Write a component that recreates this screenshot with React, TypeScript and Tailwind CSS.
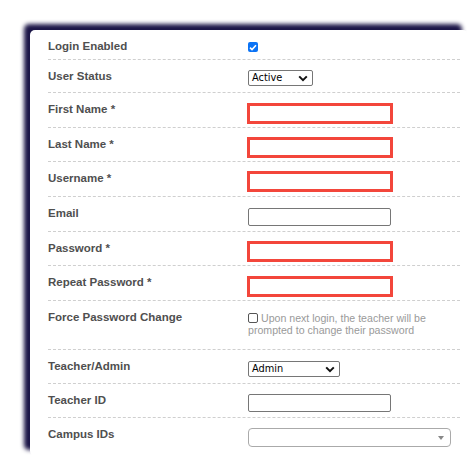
import { FC, ReactNode } from "react";

type Row = {
  label: string;
  height: string;
  control: ReactNode;
  last?: boolean;
};

const Chevron: FC = () => (
  <svg width="10" height="7" viewBox="0 0 10 7" className="shrink-0">
    <path d="M1.2 1.4 L5 5.2 L8.8 1.4" fill="none" stroke="#111" strokeWidth="2" />
  </svg>
);

const TextBox: FC<{ required?: boolean }> = ({ required }) =>
  required ? (
    <div className="ml-[-1px] h-[21px] w-[146px] border-[3px] border-[#f3463b] bg-white" />
  ) : (
    <div className="h-[18px] w-[143px] rounded-[2px] border border-[#767676] bg-white" />
  );

const NativeSelect: FC<{ value: string; width: string }> = ({ value, width }) => (
  <div
    className={`flex h-[16px] items-center justify-between rounded-[2px] border border-[#767676] bg-white pl-[3px] pr-[4px] font-['DejaVu_Sans',sans-serif] text-[9.8px] text-black ${width}`}
  >
    <span>{value}</span>
    <Chevron />
  </div>
);

export default function App() {
  const rows: Row[] = [
    {
      label: "Login Enabled",
      height: "h-[30px]",
      control: (
        <div className="pt-[12px]">
          <div className="flex h-[10px] w-[10px] items-center justify-center rounded-[2px] bg-[#0b73f5]">
            <svg width="8" height="7" viewBox="0 0 8 7">
              <path d="M1 3.6 L3 5.6 L7 1.2" fill="none" stroke="#fff" strokeWidth="1.6" />
            </svg>
          </div>
        </div>
      ),
    },
    {
      label: "User Status",
      height: "h-[33px]",
      control: (
        <div className="pt-[10px]">
          <NativeSelect value="Active" width="w-[65px]" />
        </div>
      ),
    },
    { label: "First Name *", height: "h-[35px]", control: <div className="pt-[10px]"><TextBox required /></div> },
    { label: "Last Name *", height: "h-[34px]", control: <div className="pt-[9px]"><TextBox required /></div> },
    { label: "Username *", height: "h-[35px]", control: <div className="pt-[9px]"><TextBox required /></div> },
    { label: "Email", height: "h-[35px]", control: <div className="pt-[11px]"><TextBox /></div> },
    { label: "Password *", height: "h-[34px]", control: <div className="pt-[9px]"><TextBox required /></div> },
    { label: "Repeat Password *", height: "h-[35px]", control: <div className="pt-[10px]"><TextBox required /></div> },
    {
      label: "Force Password Change",
      height: "h-[49px]",
      control: (
        <div className="pt-[11px] pr-[20px] font-['Liberation_Sans',Arial,sans-serif] text-[10.6px] leading-[12px] text-[#9a9a9a]">
          <span className="mr-[3px] inline-block h-[10px] w-[10px] translate-y-[1px] rounded-[2px] border border-[#555] bg-white align-baseline" />
          Upon next login, the teacher will be prompted to change their password
        </div>
      ),
    },
    {
      label: "Teacher/Admin",
      height: "h-[34px]",
      control: (
        <div className="pt-[11px]">
          <NativeSelect value="Admin" width="w-[92px]" />
        </div>
      ),
    },
    { label: "Teacher ID", height: "h-[34px]", control: <div className="pt-[10px]"><TextBox /></div> },
    {
      label: "Campus IDs",
      height: "h-[35px]",
      last: true,
      control: (
        <div className="pt-[10px]">
          <div className="flex h-[19px] w-[203px] items-center justify-end rounded-[4px] border border-[#aaa] bg-white pr-[6px]">
            <svg width="6" height="4" viewBox="0 0 6 4">
              <path d="M0 0 L6 0 L3 4 Z" fill="#888" />
            </svg>
          </div>
        </div>
      ),
    },
  ];

  return (
    <div className="h-[457px] w-[473px] overflow-hidden bg-white pl-[30px] pt-[30px]">
      <div className="h-[426px] w-[438px] rounded-[5px] bg-white pl-[18px] pr-[8px] shadow-[-6px_-6px_4px_#1b1547]">
        {rows.map((row) => (
          <div
            key={row.label}
            className={`flex ${row.height} ${row.last ? "" : "border-b border-dashed border-[#cfcfcf]"}`}
          >
            <div className="w-[200px] shrink-0 pt-[10px] font-['Liberation_Sans',Arial,sans-serif] text-[11.5px] font-bold leading-[13px] text-[#4f4f4f]">
              {row.label}
            </div>
            <div className="flex-1">{row.control}</div>
          </div>
        ))}
      </div>
    </div>
  );
}
